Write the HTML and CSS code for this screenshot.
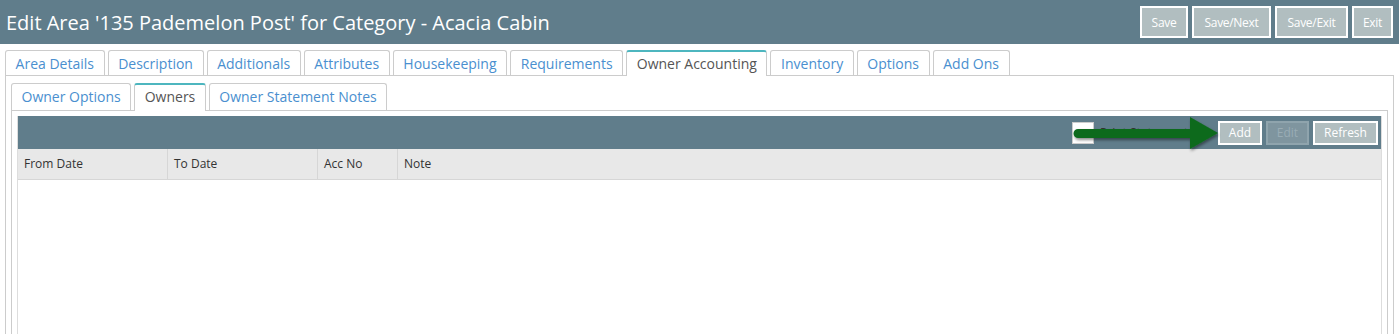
FILE: index.html
```html
<!DOCTYPE html>
<html lang="en">
<head>
  <meta charset="UTF-8">
  <title>Edit Area</title>
  <link rel="stylesheet" href="styles.css">
</head>
<body>
  <div class="page-header">
    <h1>Edit Area '135 Pademelon Post' for Category - Acacia Cabin</h1>
    <div class="header-buttons">
      <button class="btn btn-save">Save</button>
      <button class="btn btn-next">Save/Next</button>
      <button class="btn btn-exit-save">Save/Exit</button>
      <button class="btn btn-exit">Exit</button>
    </div>
  </div>

  <div class="tabs">
    <ul class="tab-list">
      <li><a href="#">Area Details</a></li>
      <li><a href="#">Description</a></li>
      <li><a href="#">Additionals</a></li>
      <li><a href="#">Attributes</a></li>
      <li><a href="#">Housekeeping</a></li>
      <li><a href="#">Requirements</a></li>
      <li class="active"><a href="#">Owner Accounting</a></li>
      <li><a href="#">Inventory</a></li>
      <li><a href="#">Options</a></li>
      <li><a href="#">Add Ons</a></li>
    </ul>
    <div class="tab-panel">
      <ul class="tab-list sub-tabs">
        <li><a href="#">Owner Options</a></li>
        <li class="active"><a href="#">Owners</a></li>
        <li><a href="#">Owner Statement Notes</a></li>
      </ul>
      <div class="tab-panel inner-panel">
        <div class="grid">
          <div class="grid-toolbar">
            <label class="print-check"><span class="check-box"></span>Print Statement</label>
            <button class="btn grid-btn btn-add">Add</button>
            <button class="btn grid-btn btn-edit" disabled>Edit</button>
            <button class="btn grid-btn btn-refresh">Refresh</button>
            <!-- highlight arrow pointing at Add -->
            <svg class="arrow" width="160" height="38" viewBox="0 0 160 38">
              <defs>
                <filter id="shadow" x="-10%" y="-30%" width="120%" height="160%">
                  <feDropShadow dx="1" dy="2" stdDeviation="1.5" flood-color="#000" flood-opacity="0.45"/>
                </filter>
              </defs>
              <path d="M8 13 H120 V1 L148 17 L120 33 V22 H8 A4.5 4.5 0 0 1 8 13 Z" fill="#0d6b1f" filter="url(#shadow)"/>
            </svg>
          </div>
          <div class="grid-header">
            <div class="col col-from">From Date</div>
            <div class="col col-to">To Date</div>
            <div class="col col-acc">Acc No</div>
            <div class="col col-note">Note</div>
          </div>
          <div class="grid-body"></div>
        </div>
      </div>
    </div>
  </div>
</body>
</html>
```

FILE: styles.css
```css
body {
  margin: 0;
  font-family: "Open Sans", "Liberation Sans", sans-serif;
  background-color: #fff;
  overflow: hidden;
}

.page-header {
  background-color: #607d8b;
  height: 44px;
  display: flex;
  align-items: center;
  justify-content: space-between;
  padding: 0 6px;
}

.page-header h1 {
  margin: 0;
  font-size: 20px;
  font-weight: normal;
  color: #fff;
}

.header-buttons {
  display: flex;
  gap: 4px;
}

.btn {
  font-family: "Open Sans", "Liberation Sans", sans-serif;
  background-color: #b1bec0;
  color: #fff;
  border: 2px solid #fff;
  padding: 0;
  cursor: pointer;
}

.header-buttons .btn {
  height: 32px;
  font-size: 12px;
  letter-spacing: -0.3px;
}

.btn-save { width: 48px; }
.btn-next { width: 79px; }
.btn-exit-save { width: 73px; }
.btn-exit { width: 41px; }

.tabs {
  margin: 6px 5px 0 5px;
}

.tab-list {
  list-style-type: none;
  margin: 0;
  padding: 0;
  display: flex;
  align-items: flex-end;
  gap: 3px;
}

.tab-list li {
  border: 1px solid #ccc;
  border-bottom: none;
  border-radius: 3px 3px 0 0;
  background-color: #fff;
}

.tab-list li a {
  display: block;
  text-decoration: none;
  color: #4a8fcf;
  font-size: 14px;
  line-height: 19px;
  padding: 3px 9.6px 2px;
}

.tab-list li.active {
  border-top: 2px solid #4db6bf;
  margin-bottom: -1px;
}

.tab-list li.active a {
  color: #555;
  padding-top: 2px;
  padding-bottom: 3px;
}

.tab-panel {
  border: 1px solid #ccc;
  padding: 7px 5px 0 5px;
  height: 400px;
}

.sub-tabs {
  gap: 3px;
}

.sub-tabs li a {
  padding: 3px 9.5px 4px;
}

.sub-tabs li.active a {
  padding-bottom: 5px;
}

.inner-panel {
  padding: 5px 5px 0 5px;
}

.grid {
  border: 1px solid #ddd;
  border-top: none;
}

.grid-toolbar {
  position: relative;
  background-color: #607d8b;
  height: 33px;
  display: flex;
  align-items: center;
  justify-content: flex-end;
  gap: 4px;
  padding: 0 3px 0 0;
}

.grid-btn {
  height: 24px;
  font-size: 12px;
}

.btn-add { width: 44px; }
.btn-refresh { width: 65px; }

.btn-edit {
  width: 43px;
  background-color: #7f959f;
  border-color: #8fa4ad;
  color: #99acb5;
  cursor: default;
}

.print-check {
  display: flex;
  align-items: center;
  font-size: 12px;
  color: #333;
  margin-right: 26px;
}

.check-box {
  display: inline-block;
  width: 20px;
  height: 20px;
  background-color: #fff;
  border: 1px solid #ccc;
  margin-right: 6px;
}

.arrow {
  position: absolute;
  left: 1052px;
  top: 0;
}

.grid-header {
  display: flex;
  background-color: #e8e8e8;
  border-bottom: 1px solid #d6d6d6;
  height: 30px;
}

.col {
  font-size: 12px;
  color: #333;
  line-height: 30px;
  padding-left: 6px;
  border-right: 1px solid #d6d6d6;
  box-sizing: border-box;
}

.col-from { width: 150px; }
.col-to { width: 150px; }
.col-acc { width: 80px; }

.col-note {
  flex: 1;
  border-right: none;
}

.grid-body {
  height: 300px;
}
```
